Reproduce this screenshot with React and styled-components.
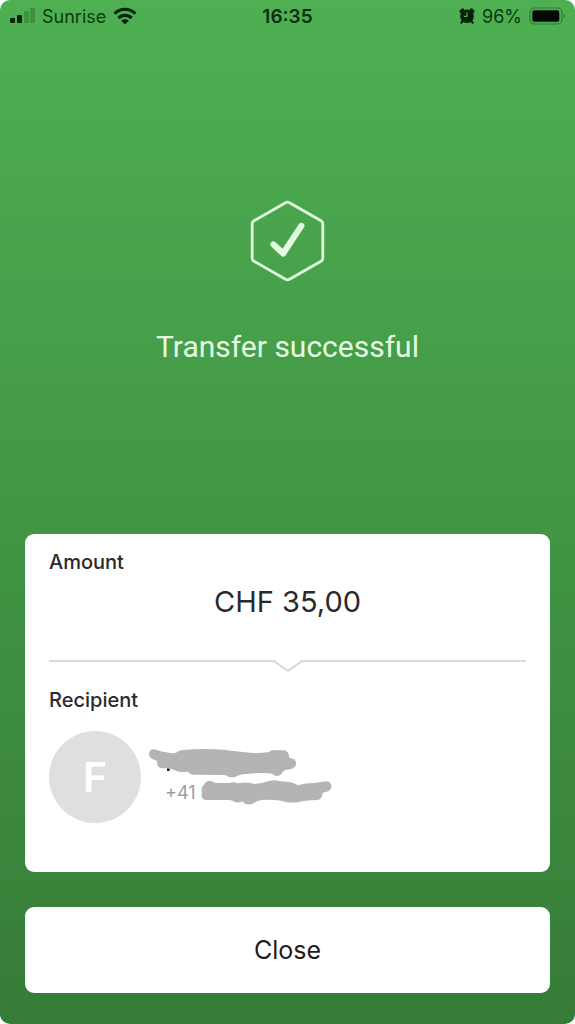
import React from "react";
import styled, { createGlobalStyle } from "styled-components";

const GlobalStyle = createGlobalStyle`
  * {
    box-sizing: border-box;
  }

  body {
    margin: 0;
    background: #fff;
    font-family: Inter, "Liberation Sans", sans-serif;
  }
`;

const Screen = styled.main`
  display: flex;
  flex-direction: column;
  min-height: 100vh;
  padding-bottom: 31px;
  border-radius: 10px;
  background: linear-gradient(#4eb052, #367c38);
`;

const StatusBar = styled.header`
  display: grid;
  grid-template-columns: 1fr auto 1fr;
  align-items: center;
  height: 32px;
  padding: 0 9px;
  font-size: 18px;
  color: #0b3a10;
`;

const StatusGroup = styled.div`
  display: flex;
  align-items: center;
  justify-content: ${(props) => props.$align || "flex-start"};
  gap: 7px;
`;

const Time = styled.time`
  font-size: 19px;
  font-weight: 600;
  color: #0a2e0d;
`;

const Result = styled.section`
  display: flex;
  flex: 1;
  flex-direction: column;
  align-items: center;
  padding-top: 168px;
`;

const Title = styled.h1`
  margin: 45px 0 0;
  font-family: Roboto, "Liberation Sans", sans-serif;
  font-size: 30px;
  font-weight: 400;
  line-height: 40px;
  color: #e6fbe4;
`;

const Card = styled.section`
  margin: 0 25px;
  padding: 16px 24px 49px;
  border-radius: 9px;
  background: #fff;
`;

const Label = styled.h2`
  margin: 0;
  font-size: 20px;
  font-weight: 500;
  line-height: 24px;
  color: #2a2a2c;
`;

const Amount = styled.p`
  margin: 10px 0 40px;
  font-size: 29px;
  line-height: 36px;
  text-align: center;
  color: #2a2a2c;
`;

const Divider = styled.div`
  display: flex;
  margin-bottom: 16px;
`;

const Line = styled.span`
  flex: 1;
  height: 2px;
  background: #dadada;
`;

const Recipient = styled.div`
  display: flex;
  align-items: center;
  gap: 8px;
  margin-top: 19px;
`;

const Avatar = styled.div`
  display: flex;
  align-items: center;
  justify-content: center;
  width: 92px;
  height: 92px;
  border-radius: 50%;
  background: #dfdfdf;
  font-size: 41px;
  font-weight: 600;
  color: #fff;
`;

const Contact = styled.div`
  display: flex;
  flex-direction: column;
  gap: 2px;
`;

const Phone = styled.div`
  display: flex;
  align-items: center;
  gap: 5px;
  padding-left: 16px;
  font-size: 18px;
  color: #9c9c9c;
`;

const CloseButton = styled.button`
  height: 86px;
  margin: 35px 25px 0;
  border: 0;
  border-radius: 9px;
  background: #fff;
  font-family: inherit;
  font-size: 25px;
  color: #1c1c1e;
`;

function Signal() {
  return (
    <svg width="26" height="16" viewBox="0 0 26 16" aria-hidden="true">
      <rect x="1" y="10" width="5" height="5" rx="1" fill="#06220a" />
      <rect x="8" y="7" width="5" height="8" rx="1" fill="#06220a" />
      <rect x="15" y="3" width="5" height="12" rx="1" fill="#3d9141" />
      <rect x="21" y="0" width="5" height="15" rx="1" fill="#3d9141" />
    </svg>
  );
}

function Wifi() {
  return (
    <svg width="24" height="18" viewBox="0 0 24 18" aria-hidden="true">
      <g fill="none" stroke="#06220a" strokeWidth="3.2">
        <path d="M1.6 6.6C7.4.8 16.6.8 22.4 6.6" />
        <path d="M5.4 11c3.7-3.6 9.5-3.6 13.2 0" />
      </g>
      <path d="M8.2 13.8c2.2-2 5.4-2 7.6 0L12 17.6z" fill="#06220a" />
    </svg>
  );
}

function Alarm() {
  return (
    <svg width="16" height="16" viewBox="0 0 16 16" aria-hidden="true">
      <g stroke="#06220a" strokeLinecap="round">
        <path d="M2 3.4 3.6 1.9M12.4 1.9 14 3.4" strokeWidth="3" />
        <path d="m3.6 13-1.2 1.6M12.4 13l1.2 1.6" strokeWidth="2.2" />
      </g>
      <circle cx="8" cy="8.2" r="6.8" fill="#06220a" />
      <path d="M8 4.4v4H4.8" fill="none" stroke="#4eae52" strokeWidth="1.2" />
    </svg>
  );
}

function Battery() {
  return (
    <svg width="37" height="18" viewBox="0 0 37 18" aria-hidden="true">
      <rect x="1" y="1" width="32" height="16" rx="4.5" fill="none" stroke="#2f7a34" strokeWidth="1.2" />
      <rect x="3.3" y="3.3" width="27" height="11.4" rx="2.5" fill="#020a03" />
      <path d="M34.8 6.5c1.6.9 1.6 4.1 0 5z" fill="#2f7a34" />
    </svg>
  );
}

function SuccessMark() {
  return (
    <svg width="75" height="82" viewBox="0 0 76 83" fill="none" stroke="#e2fbdf" aria-hidden="true">
      <path
        d="M36 2.8q2-1.2 4 0l32 18.2q1.8 1 1.8 3v35q0 2-1.8 3L40 80.2q-2 1.2-4 0L4 62q-1.8-1-1.8-3V24q0-2 1.8-3z"
        strokeWidth="2.8"
      />
      <path d="M23.8 45 33.6 54.2 52 26.2" strokeWidth="6.2" strokeLinecap="round" strokeLinejoin="round" />
    </svg>
  );
}

function Notch() {
  return (
    <svg width="32" height="12" viewBox="0 0 32 12" fill="none" aria-hidden="true">
      <path d="M0 1h2l14 10L30 1h2" stroke="#d2d2d2" strokeWidth="1.6" />
    </svg>
  );
}

// marker strokes over the private name
function HiddenName() {
  return (
    <svg width="148" height="29" viewBox="28 24 444 87" aria-hidden="true">
      <path d="M82 82h8v8h-8zM133 84h10v6h-10z" fill="#222" />
      <path
        d="M40 25Q50 25 62 31L92 36Q104 38 112 34Q118 27 130 27Q190 22 250 26L330 35Q360 38 388 33Q398 25 412 28H434Q448 30 448 50Q470 52 470 68Q468 84 440 86Q428 90 426 98Q412 112 398 98Q370 94 330 98Q300 98 286 108Q270 112 256 102L160 101Q150 99 144 92Q120 94 110 90Q96 82 84 82H70Q50 80 52 62Q52 58 44 56Q28 52 28 40Q28 26 40 25Z"
        fill="#b4b4b4"
      />
    </svg>
  );
}

function HiddenNumber() {
  return (
    <svg width="131" height="25" viewBox="185 118 393 75" aria-hidden="true">
      <path
        d="M208 121Q220 120 228 127H270Q284 122 294 128Q326 122 344 130Q370 128 388 121Q404 117 420 121L450 124Q466 126 476 134Q500 127 524 127L560 122Q578 124 576 140Q574 154 550 156Q548 176 534 178Q500 178 480 184Q450 188 430 182Q410 176 366 178Q350 182 340 189Q320 196 308 182Q300 188 286 184Q278 178 270 178H200Q185 176 187 160Q189 156 187 150Q186 138 194 132Q198 122 208 121Z"
        fill="#b4b4b4"
      />
    </svg>
  );
}

export default function App() {
  return (
    <>
      <GlobalStyle />
      <Screen>
        <StatusBar>
          <StatusGroup>
            <Signal />
            <span>Sunrise</span>
            <Wifi />
          </StatusGroup>
          <Time>16:35</Time>
          <StatusGroup $align="flex-end">
            <Alarm />
            <span>96%</span>
            <Battery />
          </StatusGroup>
        </StatusBar>

        <Result>
          <SuccessMark />
          <Title>Transfer successful</Title>
        </Result>

        <Card>
          <Label>Amount</Label>
          <Amount>CHF 35,00</Amount>
          <Divider>
            <Line />
            <Notch />
            <Line />
          </Divider>
          <Label>Recipient</Label>
          <Recipient>
            <Avatar>F</Avatar>
            <Contact>
              <HiddenName />
              <Phone>
                <span>+41</span>
                <HiddenNumber />
              </Phone>
            </Contact>
          </Recipient>
        </Card>

        <CloseButton type="button">Close</CloseButton>
      </Screen>
    </>
  );
}
